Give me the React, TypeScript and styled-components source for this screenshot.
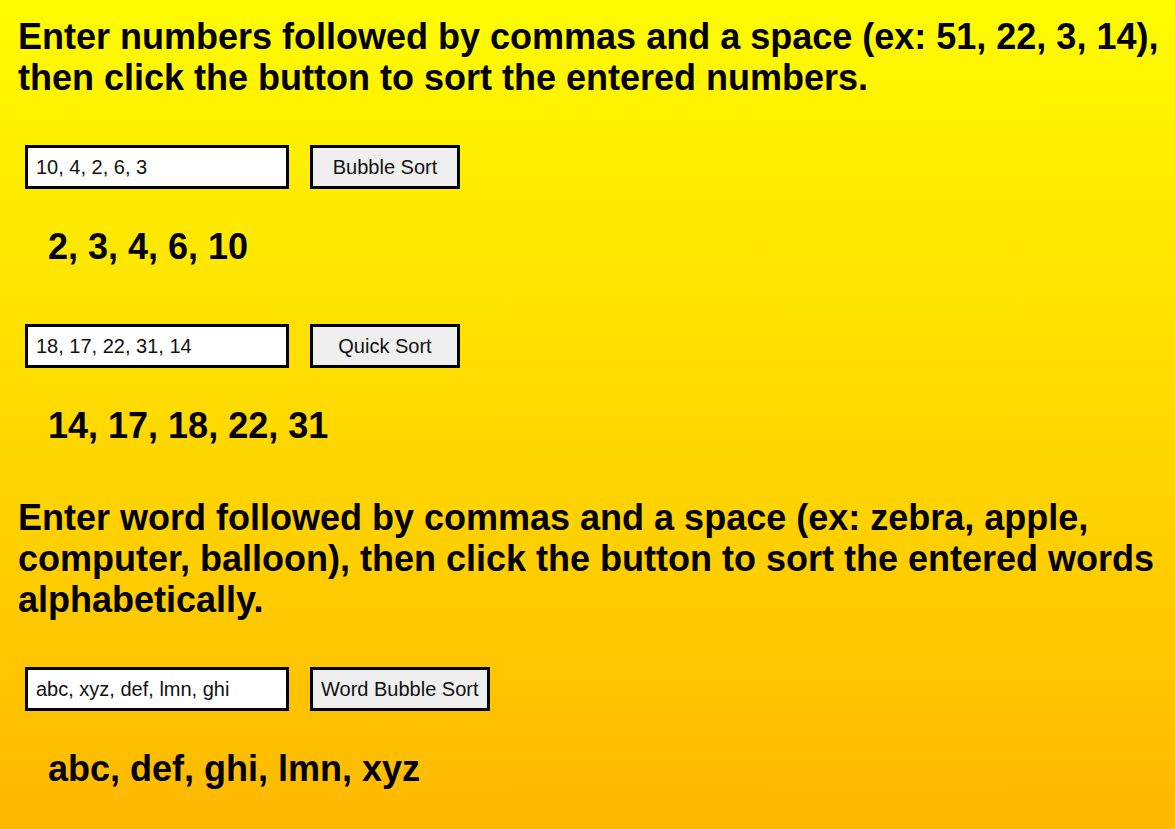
import React, { useState } from "react";
import styled, { createGlobalStyle } from "styled-components";

const GlobalStyle = createGlobalStyle`
  html, body {
    margin: 0;
    padding: 0;
  }
  body {
    font-family: "Liberation Sans", Arial, sans-serif;
    background: linear-gradient(to bottom, #fffc00 0px, #ffb800 829px);
    min-height: 100vh;
  }
`;

const Page = styled.main`
  display: flex;
  flex-direction: column;
  align-items: flex-start;
  min-height: 100vh;
  padding-top: 16px;
  box-sizing: border-box;
  color: #000;
`;

const Heading = styled.h2`
  margin: 0 0 47px 18px;
  font-size: 36px;
  line-height: 41px;
  font-weight: 700;
`;

const Form = styled.div`
  display: flex;
  gap: 21px;
  margin-left: 25px;
`;

const Input = styled.input`
  box-sizing: border-box;
  width: 264px;
  height: 44px;
  border: 3px solid #000;
  padding: 0 8px;
  font-family: "Liberation Sans", Arial, sans-serif;
  font-size: 20px;
  color: #111;
  background: #fff;
  outline: none;
`;

const Button = styled.button`
  box-sizing: border-box;
  min-width: 150px;
  height: 44px;
  border: 3px solid #000;
  padding: 0 8px;
  background: #efefef;
  font-family: "Liberation Sans", Arial, sans-serif;
  font-size: 20px;
  color: #111;
  cursor: pointer;
`;

const Result = styled.h2<{ $after: number }>`
  margin: 38px 0 ${(p) => p.$after}px 48px;
  font-size: 36px;
  line-height: 40px;
  font-weight: 700;
`;

function bubbleSort<T>(arr: T[]): T[] {
  const a = [...arr];
  for (let i = 0; i < a.length; i++) {
    for (let j = 0; j < a.length - i - 1; j++) {
      if (a[j] > a[j + 1]) {
        const t = a[j];
        a[j] = a[j + 1];
        a[j + 1] = t;
      }
    }
  }
  return a;
}

function quickSort(arr: number[]): number[] {
  if (arr.length <= 1) return arr;
  const [p, ...rest] = arr;
  return [...quickSort(rest.filter((x) => x < p)), p, ...quickSort(rest.filter((x) => x >= p))];
}

type SorterProps = {
  initial: string;
  label: string;
  after: number;
  sort: (s: string) => string;
};

function Sorter({ initial, label, after, sort }: SorterProps) {
  const [value, setValue] = useState(initial);
  const [result, setResult] = useState(sort(initial));
  return (
    <>
      <Form>
        <Input value={value} onChange={(e) => setValue(e.target.value)} />
        <Button onClick={() => setResult(sort(value))}>{label}</Button>
      </Form>
      <Result $after={after}>{result}</Result>
    </>
  );
}

const nums = (s: string) =>
  s
    .split(",")
    .map((x) => x.trim())
    .filter(Boolean)
    .map(Number);

export default function App() {
  return (
    <>
      <GlobalStyle />
      <Page>
        <Heading>
          Enter numbers followed by commas and a space (ex: 51, 22, 3, 14),
          <br />
          then click the button to sort the entered numbers.
        </Heading>
        <Sorter
          initial="10, 4, 2, 6, 3"
          label="Bubble Sort"
          after={57}
          sort={(s) => bubbleSort(nums(s)).join(", ")}
        />
        <Sorter
          initial="18, 17, 22, 31, 14"
          label="Quick Sort"
          after={51}
          sort={(s) => quickSort(nums(s)).join(", ")}
        />
        <Heading>
          Enter word followed by commas and a space (ex: zebra, apple,
          <br />
          computer, balloon), then click the button to sort the entered words
          <br />
          alphabetically.
        </Heading>
        <Sorter
          initial="abc, xyz, def, lmn, ghi"
          label="Word Bubble Sort"
          after={40}
          sort={(s) =>
            bubbleSort(
              s
                .split(",")
                .map((x) => x.trim())
                .filter(Boolean)
            ).join(", ")
          }
        />
      </Page>
    </>
  );
}
